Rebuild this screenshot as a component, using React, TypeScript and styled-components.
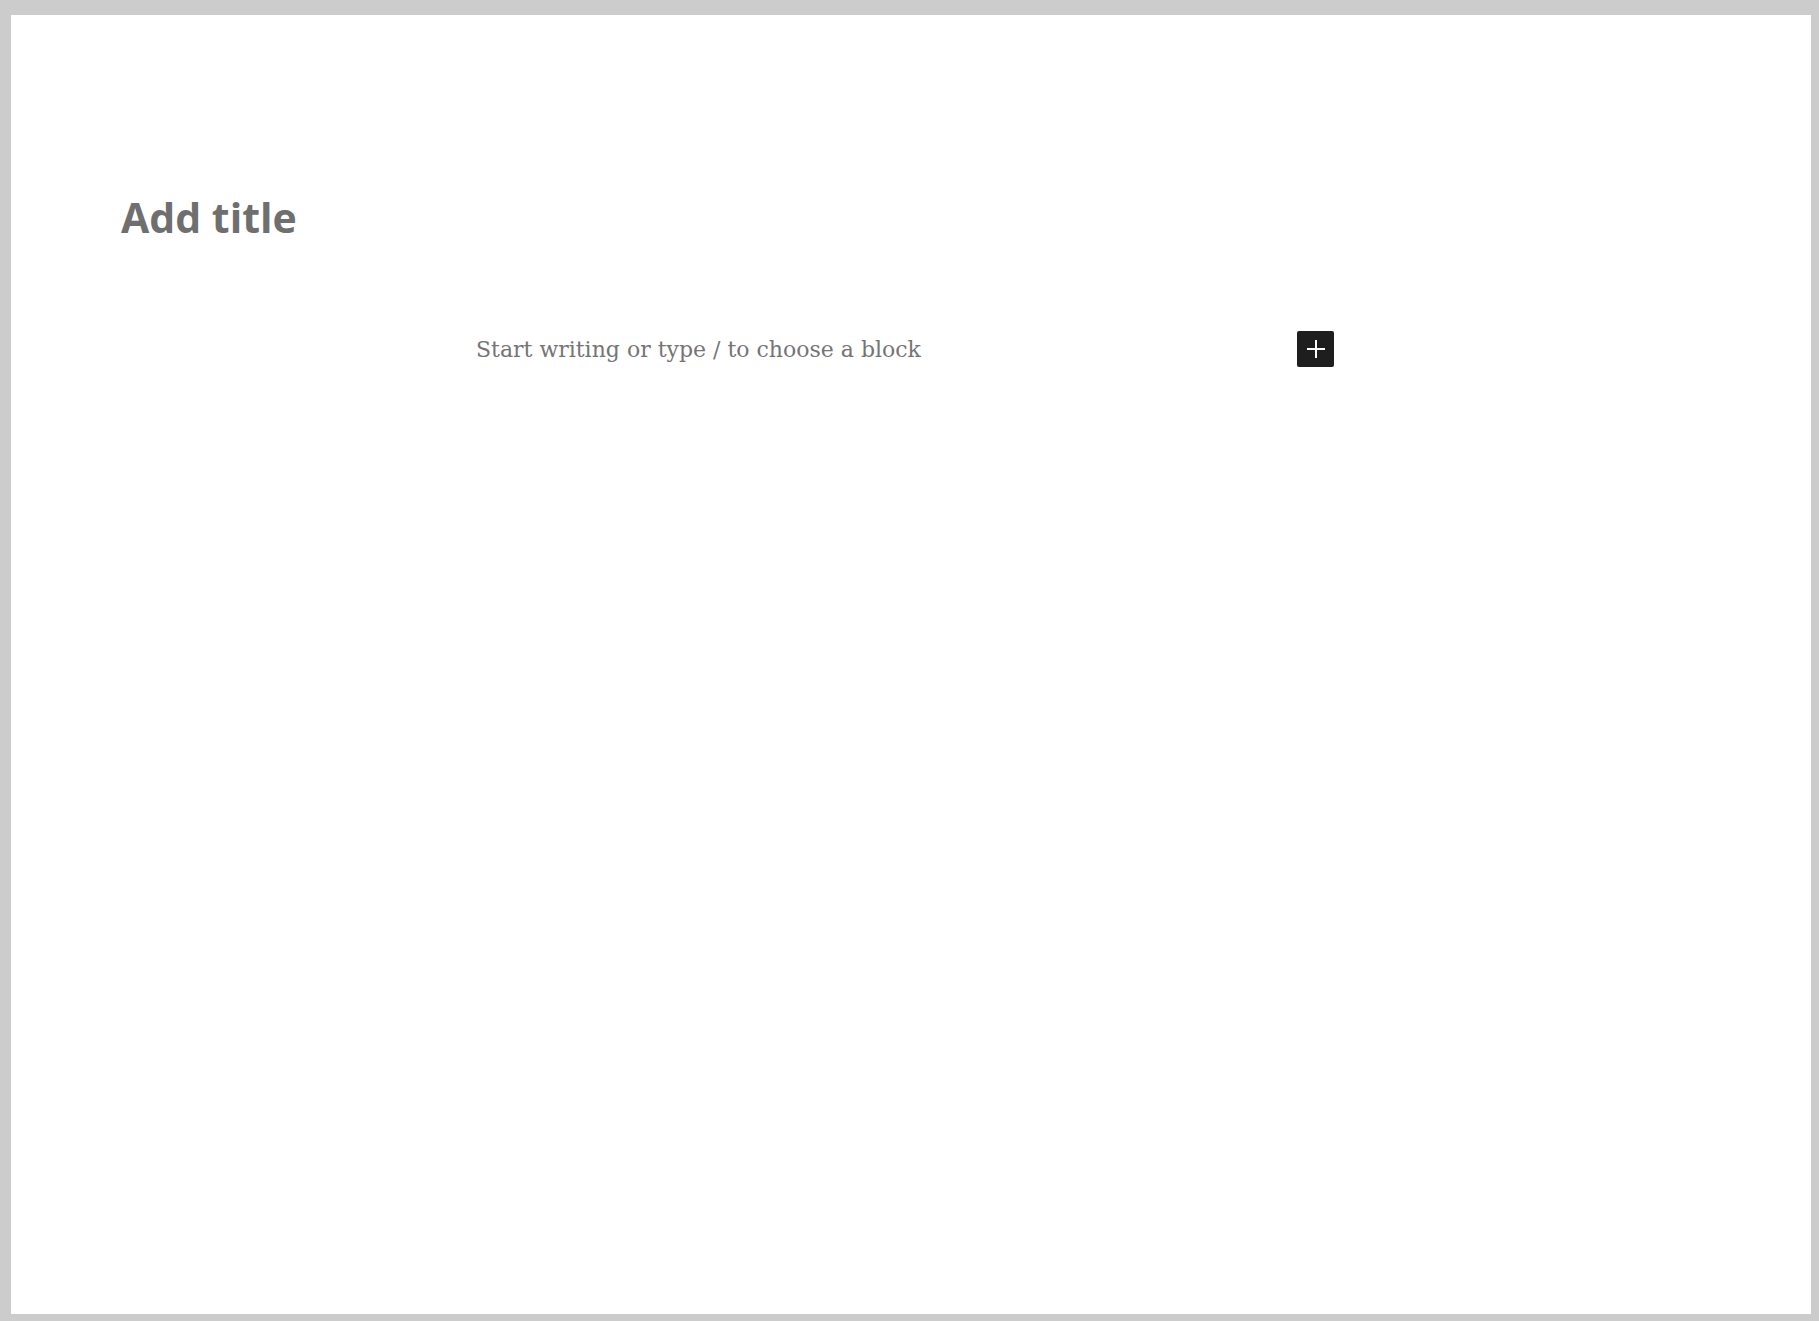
import styled, { createGlobalStyle } from 'styled-components';

const Global = createGlobalStyle`
  html, body {
    margin: 0;
    padding: 0;
    background: #cccccc;
  }
  body {
    padding: 15px 8px 7px 11px;
    box-sizing: border-box;
    height: 1321px;
  }
  #root {
    height: 100%;
  }
`;

const Canvas = styled.div`
  height: 100%;
  background: #ffffff;
  display: flex;
  flex-direction: column;
`;

const Title = styled.h1`
  margin: 174px 0 0 110px;
  font-family: 'Open Sans', Lato, sans-serif;
  font-weight: 700;
  font-size: 41px;
  line-height: 56px;
  color: #6f6f6f;
  letter-spacing: 0;
`;

const BlockRow = styled.div`
  margin: 86px 0 0 465px;
  width: 858px;
  display: flex;
  align-items: center;
  justify-content: space-between;
`;

const Placeholder = styled.p`
  margin: 0;
  font-family: 'DejaVu Serif', 'Liberation Serif', serif;
  font-size: 22px;
  color: #757575;
`;

const Inserter = styled.button`
  width: 37px;
  height: 36px;
  border: none;
  border-radius: 2px;
  background: #1e1e1e;
  display: flex;
  align-items: center;
  justify-content: center;
  padding: 0;
`;

function App() {
  return (
    <>
      <Global />
      <Canvas>
        <Title>Add title</Title>
        <BlockRow>
          <Placeholder>Start writing or type / to choose a block</Placeholder>
          <Inserter aria-label="Add block">
            <svg width="24" height="24" viewBox="0 0 24 24">
              <path d="M11 3h2v8h8v2h-8v8h-2v-8H3v-2h8z" fill="#fff" />
            </svg>
          </Inserter>
        </BlockRow>
      </Canvas>
    </>
  );
}

export default App;
